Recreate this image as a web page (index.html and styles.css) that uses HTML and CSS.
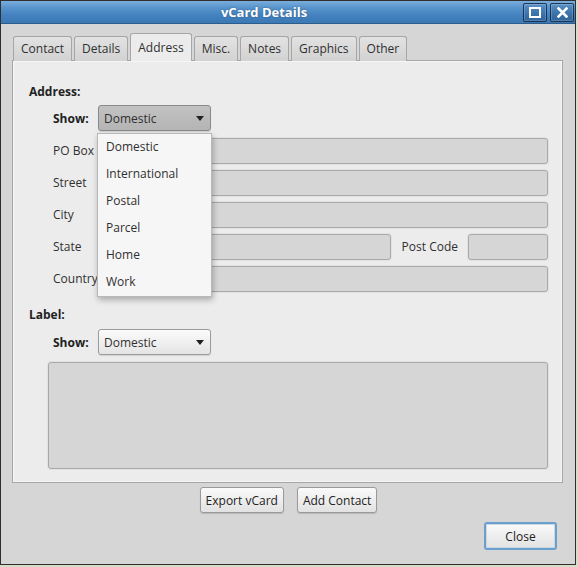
FILE: index.html
```html
<!DOCTYPE html>
<html lang="en">
  <head>
    <meta charset="UTF-8" />
    <title>vCard Details</title>
    <link rel="stylesheet" href="styles.css">
  </head>
  <body>
    <div class="window">
      <div class="titlebar">
        <span class="title">vCard Details</span>
        <div class="wm-buttons">
          <span class="wm-btn">
            <svg width="12" height="11" viewBox="0 0 12 11">
              <rect x="1" y="1" width="10" height="9" fill="none" stroke="#fff" stroke-width="2" />
            </svg>
          </span>
          <span class="wm-btn">
            <svg width="11" height="11" viewBox="0 0 11 11">
              <path d="M1.5 1.5L9.5 9.5M9.5 1.5L1.5 9.5" stroke="#fff" stroke-width="2.6" stroke-linecap="square" />
            </svg>
          </span>
        </div>
      </div>

      <div class="dialog">
        <div class="tabs">
          <div class="tab">Contact</div>
          <div class="tab">Details</div>
          <div class="tab active">Address</div>
          <div class="tab">Misc.</div>
          <div class="tab">Notes</div>
          <div class="tab">Graphics</div>
          <div class="tab">Other</div>
        </div>

        <div class="pane">
          <div class="section-title">Address:</div>
          <div class="show-row">
            <span class="show-label">Show:</span>
            <div class="combo pressed">
              <span>Domestic</span>
              <span class="arrow"></span>
              <ul class="popup">
                <li>Domestic</li>
                <li>International</li>
                <li>Postal</li>
                <li>Parcel</li>
                <li>Home</li>
                <li>Work</li>
              </ul>
            </div>
          </div>

          <div class="form">
            <span class="field-label">PO Box</span>
            <div class="field wide"></div>
            <span class="field-label">Street</span>
            <div class="field wide"></div>
            <span class="field-label">City</span>
            <div class="field wide"></div>
            <span class="field-label">State</span>
            <div class="field"></div>
            <span class="field-label post">Post Code</span>
            <div class="field"></div>
            <span class="field-label">Country</span>
            <div class="field wide"></div>
          </div>

          <div class="section-title label-title">Label:</div>
          <div class="show-row">
            <span class="show-label">Show:</span>
            <div class="combo">
              <span>Domestic</span>
              <span class="arrow"></span>
            </div>
          </div>
          <div class="textarea"></div>
        </div>

        <div class="actions">
          <button class="btn">Export vCard</button>
          <button class="btn">Add Contact</button>
        </div>
        <div class="footer">
          <button class="btn close">Close</button>
        </div>
      </div>
    </div>
  </body>
</html>
```

FILE: styles.css
```css
:root {
  --window: #d6d6d6;
  --pane: #ececec;
  --border: #a6a6a6;
  --text: #303030;
}

html,
body {
  margin: 0;
  padding: 0;
  background-color: #d9dcc6;
  font-family: "Open Sans", "Noto Sans", sans-serif;
  font-size: 12px;
  color: var(--text);
}

.window {
  width: 576px;
  height: 565px;
  box-sizing: border-box;
  border: 1px solid #2f2f2f;
  background-color: var(--window);
  display: flex;
  flex-direction: column;
}

.titlebar {
  height: 22px;
  display: flex;
  align-items: center;
  border-bottom: 1px solid #2d5d8c;
  background: linear-gradient(180deg, #7aaedb 0%, #5894cc 30%, #4382bf 65%, #3b78b4 100%);
}

.title {
  flex: 1;
  text-align: center;
  color: #fff;
  font-size: 13px;
  font-weight: bold;
  text-shadow: 0 0 2px rgba(0, 0, 0, 0.35);
  padding-left: 4px;
}

.wm-buttons {
  display: flex;
  gap: 3px;
  padding-right: 1px;
}

.wm-btn {
  width: 22px;
  height: 17px;
  display: flex;
  align-items: center;
  justify-content: center;
  border: 1px solid rgba(15, 35, 65, 0.8);
  border-radius: 2px;
  box-shadow: inset 0 0 0 1px rgba(255, 255, 255, 0.18);
  background: linear-gradient(180deg, rgba(30, 70, 120, 0.15), rgba(20, 50, 90, 0.3));
}

.dialog {
  flex: 1;
  display: flex;
  flex-direction: column;
  padding: 9px 12px 0 11px;
}

/* tabs */
.tabs {
  display: flex;
  align-items: flex-end;
  gap: 2px;
  margin-left: 1px;
  margin-bottom: -1px;
  position: relative;
  z-index: 2;
}

.tab {
  height: 25px;
  line-height: 24px;
  padding: 0 7px;
  box-sizing: border-box;
  border: 1px solid var(--border);
  border-bottom: none;
  border-radius: 3px 3px 0 0;
  background: linear-gradient(180deg, #e2e2e2, #d2d2d2);
}

.tab.active {
  height: 28px;
  line-height: 27px;
  background: var(--pane);
  padding: 0 7px;
}

.pane {
  position: relative;
  z-index: 1;
  background-color: var(--pane);
  border: 1px solid var(--border);
  box-shadow: inset 0 0 0 1px #f6f6f6;
  padding: 22px 14px 13px 16px;
}

.section-title {
  font-weight: bold;
  line-height: 18px;
  color: #222;
}

.label-title {
  margin-top: 14px;
}

.show-row {
  display: flex;
  align-items: center;
  margin-top: 4px;
  margin-left: 24px;
}

.label-title + .show-row {
  margin-top: 5px;
}

.show-label {
  width: 45px;
  font-weight: bold;
  color: #222;
}

.combo {
  position: relative;
  width: 113px;
  height: 26px;
  box-sizing: border-box;
  display: flex;
  align-items: center;
  justify-content: space-between;
  padding: 0 6px 0 5px;
  border: 1px solid #9c9c9c;
  border-radius: 3px;
  background: linear-gradient(180deg, #fbfbfb, #e4e4e4);
  box-shadow: 0 1px 1px rgba(0, 0, 0, 0.12);
}

.combo.pressed {
  border-color: #8a8a8a;
  background: linear-gradient(180deg, #c2c2c2, #b4b4b4);
}

.arrow {
  width: 0;
  height: 0;
  border-left: 4px solid transparent;
  border-right: 4px solid transparent;
  border-top: 5px solid #222;
  margin-top: 1px;
}

.popup {
  position: absolute;
  top: 27px;
  left: -2px;
  width: 115px;
  margin: 0;
  padding: 0;
  list-style: none;
  box-sizing: border-box;
  background-color: #f6f6f6;
  border: 1px solid #b8b8b8;
  box-shadow: 1px 3px 6px rgba(0, 0, 0, 0.28);
  z-index: 5;
}

.popup li {
  height: 27px;
  line-height: 25px;
  padding-left: 8px;
}

/* form */
.form {
  display: grid;
  grid-template-columns: 48px 1fr auto 80px;
  grid-auto-rows: 26px;
  row-gap: 6px;
  margin-top: 7px;
  margin-left: 24px;
  align-items: center;
}

.field-label {
  white-space: nowrap;
  margin-top: -2px;
}

.field-label.post {
  padding: 0 10px 0 11px;
}

.field {
  height: 26px;
  box-sizing: border-box;
  background-color: #d6d6d6;
  border: 1px solid #a9a9a9;
  border-radius: 3px;
  box-shadow: 0 0 0 1px #e2e2e2;
}

.field.wide {
  grid-column: 2 / 5;
}

.textarea {
  height: 107px;
  margin-top: 7px;
  margin-left: 19px;
  box-sizing: border-box;
  background-color: #d6d6d6;
  border: 1px solid #a9a9a9;
  border-radius: 3px;
  box-shadow: 0 0 0 1px #e2e2e2;
}

/* buttons */
.actions {
  display: flex;
  justify-content: center;
  gap: 13px;
  margin-top: 4px;
  padding-left: 2px;
}

.btn {
  height: 26px;
  padding: 0 5px;
  font-family: inherit;
  font-size: 12px;
  color: #222;
  border: 1px solid #9a9a9a;
  border-radius: 3px;
  background: linear-gradient(180deg, #fafafa, #e2e2e2);
  box-shadow: 0 1px 1px rgba(0, 0, 0, 0.15);
}

.footer {
  display: flex;
  justify-content: flex-end;
  margin-top: 9px;
  padding-right: 6px;
}

.btn.close {
  width: 73px;
  height: 28px;
  border: 2px solid #6d9fcc;
  box-shadow: inset 0 0 0 1px #c8d8e8;
}
```
